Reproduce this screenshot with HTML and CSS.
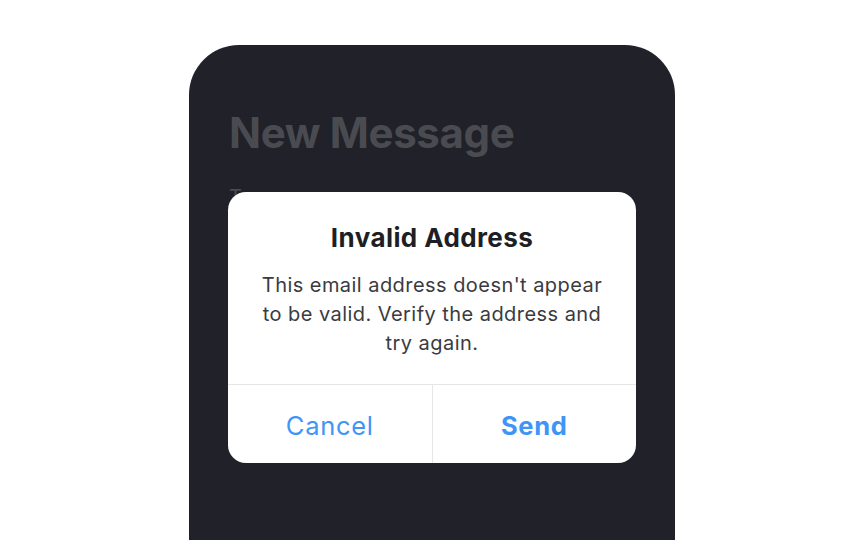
FILE: index.html
```html
<!DOCTYPE html>
<html>
<head>
<meta charset="utf-8">
<link rel="stylesheet" href="styles.css">
</head>
<body>
<div class="stage">
  <div class="phone">
    <h1 class="title">New Message</h1>
    <div class="to-row">To:</div>
    <div class="alert">
      <div class="alert-body">
        <div class="alert-title">Invalid Address</div>
        <div class="alert-text">This email address doesn't appear to be valid. Verify the address and try again.</div>
      </div>
      <div class="alert-actions">
        <div class="action">Cancel</div>
        <div class="action primary">Send</div>
      </div>
    </div>
  </div>
</div>
</body>
</html>
```
FILE: styles.css
```css
html, body {
  margin: 0;
  padding: 0;
  background: #ffffff;
  font-family: Inter, "Noto Sans", sans-serif;
}
.stage {
  width: 864px;
  height: 540px;
  overflow: hidden;
  padding-top: 45px;
  padding-left: 189px;
  box-sizing: border-box;
}
.phone {
  position: relative;
  width: 486px;
  height: 520px;
  background: #202129;
  border-radius: 50px 50px 0 0;
  padding: 62px 40px 0 40px;
  box-sizing: border-box;
}
.title {
  margin: 0;
  font-size: 42px;
  line-height: 52px;
  font-weight: 700;
  color: #4a4b51;
  letter-spacing: -0.35px;
}
.to-row {
  margin-top: 26px;
  font-size: 20px;
  line-height: 24px;
  color: #4a4b51;
}
.alert {
  position: absolute;
  left: 39px;
  top: 147px;
  width: 408px;
  background: #ffffff;
  border-radius: 18px;
  overflow: hidden;
}
.alert-body {
  padding: 30px 22px 26px;
  text-align: center;
  border-bottom: 1px solid #e6e6e8;
}
.alert-title {
  font-size: 26px;
  line-height: 32px;
  font-weight: 700;
  color: #1e1f25;
  letter-spacing: 0.4px;
}
.alert-text {
  margin-top: 17px;
  font-size: 20px;
  line-height: 29px;
  color: #3a3b41;
  letter-spacing: 0.45px;
}
.alert-actions {
  display: flex;
  height: 78px;
}
.action {
  flex: 1;
  display: flex;
  align-items: center;
  justify-content: center;
  padding-top: 3px;
  box-sizing: border-box;
  font-size: 25.5px;
  color: #3e95f6;
  letter-spacing: 0.7px;
}
.action + .action {
  border-left: 1px solid #e6e6e8;
}
.action.primary {
  font-weight: 700;
}
```
